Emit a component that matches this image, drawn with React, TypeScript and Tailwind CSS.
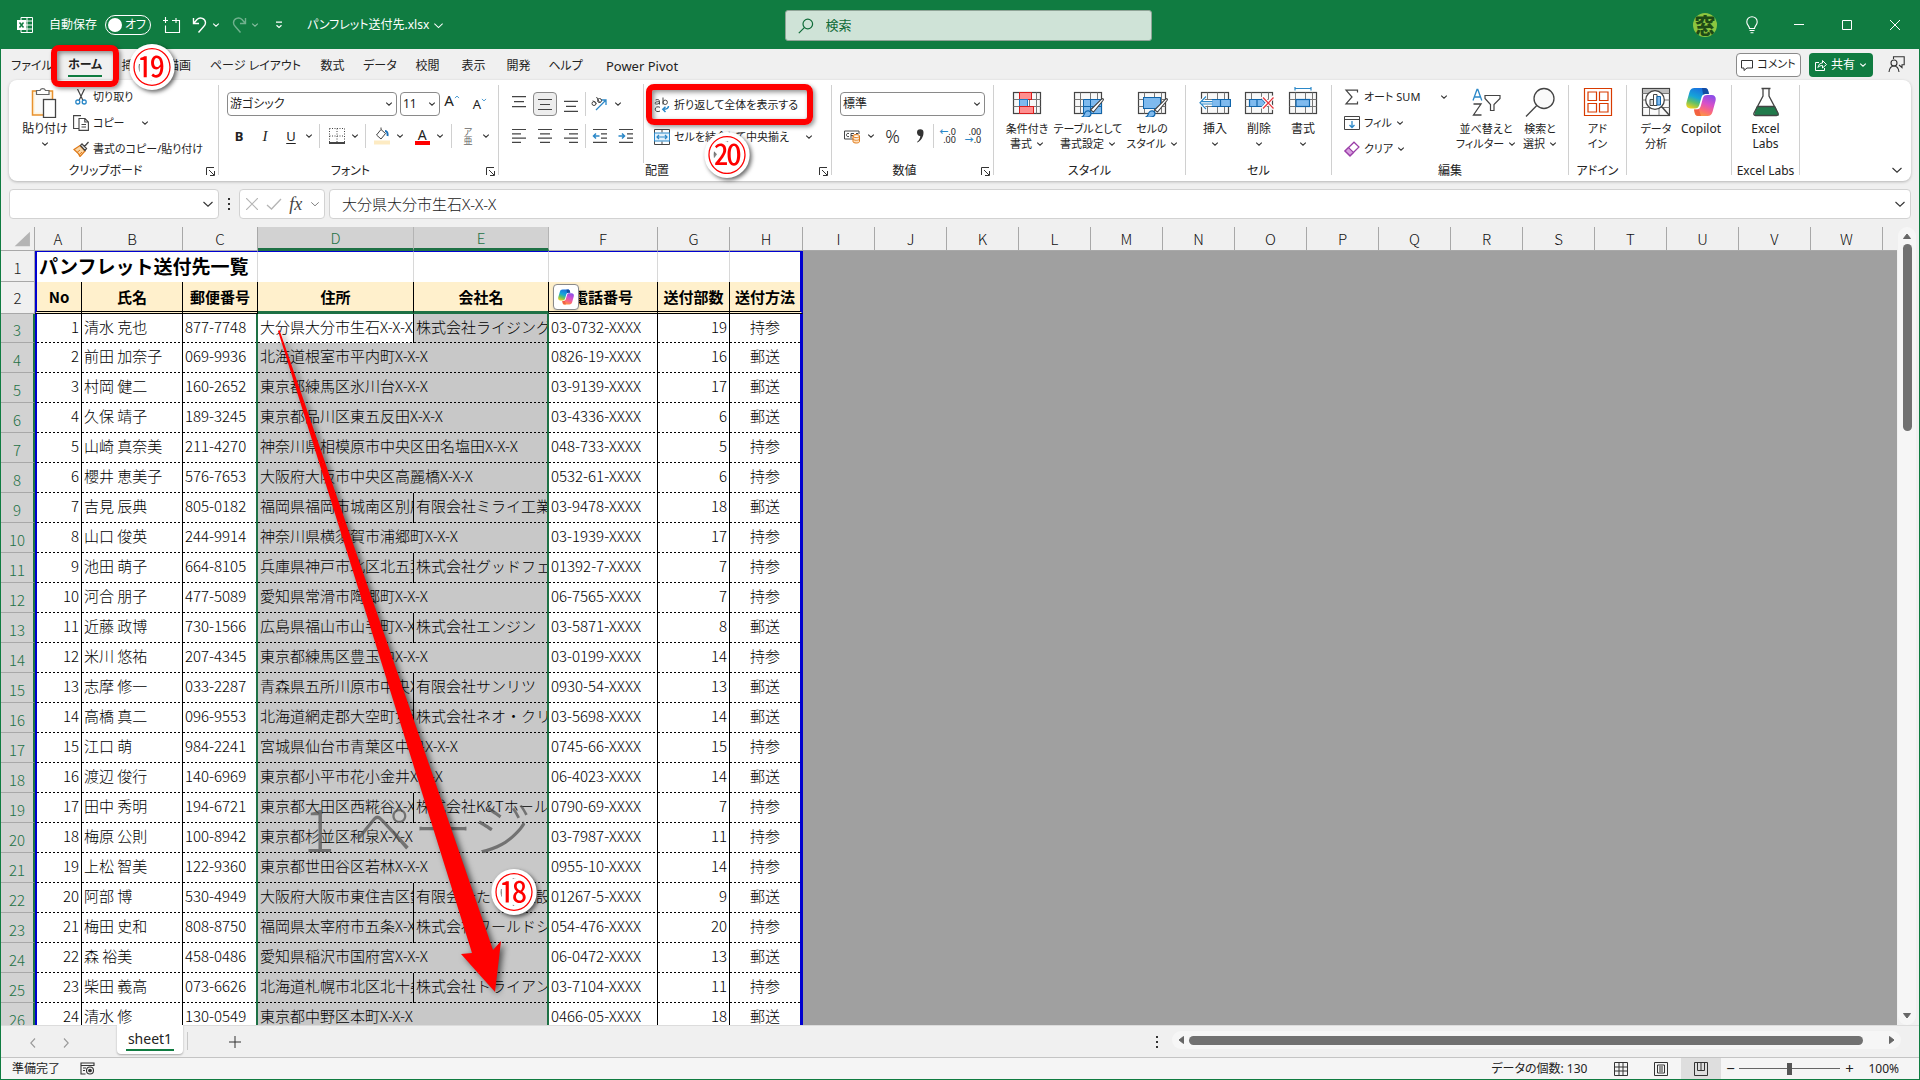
import React from "react";

type IconProps = { className?: string };

const Chevron = ({ className = "w-2 h-2 text-[#333]" }: IconProps) => (
  <svg viewBox="0 0 8 8" className={`inline-block shrink-0 ${className}`} fill="none" stroke="currentColor" strokeWidth="1.1">
    <path d="M1.2 2.6 4 5.2 6.8 2.6" />
  </svg>
);
const WideChevron = ({ className = "h-3 w-3 text-[#333]" }: IconProps) => (
  <svg viewBox="0 0 12 12" className={`inline-block shrink-0 ${className}`} fill="none" stroke="currentColor" strokeWidth="1.1">
    <path d="M1.500 4 6 8.200 10.500 4" />
  </svg>
);

const Launcher = ({ label }: { label: string }) => (
  <button aria-label={label} className="flex h-4 w-4 items-center justify-center">
    <svg viewBox="0 0 9 9" className="h-[9px] w-[9px]" fill="none" stroke="#333">
      <path d="M.5 8V.5H8M3 3l5 5M8.5 4v4.5H4" />
    </svg>
  </button>
);

/* ---------- ribbon drawings ---------- */

const PasteIcon = () => (
  <svg viewBox="0 0 28 32" className="h-8 w-7" fill="none">
    <rect x="1.5" y="5" width="20" height="24" fill="#fff4de" stroke="#e8912d" strokeWidth="1.500" />
    <rect x="4" y="7.500" width="15" height="19" fill="#fafafa" />
    <path d="M5.500 8.500V4.500h3.500a3 3 0 0 1 5.500 0h3.500v4z" fill="#fff" stroke="#666" strokeWidth="1.200" />
    <rect x="12.500" y="13.500" width="12" height="18" fill="#fff" stroke="#444" strokeWidth="1.300" />
  </svg>
);
const CutIcon = () => (
  <svg viewBox="0 0 16 16" className="h-4 w-4" fill="none">
    <path d="M4.500 0 10 11.500M11.500 0 6 11.500" stroke="#444" strokeWidth="1.200" />
    <circle cx="4.800" cy="13" r="2" stroke="#2b88c8" strokeWidth="1.300" />
    <circle cx="11.200" cy="13" r="2" stroke="#2b88c8" strokeWidth="1.300" />
  </svg>
);
const CopyIcon = () => (
  <svg viewBox="0 0 16 16" className="h-4 w-4" fill="none" stroke="#444" strokeWidth="1.100">
    <path d="M6 13.500H.600V.600H8" />
    <path d="M6 3.500h6l3.400 3.400v8.500H6zM11.800 3.500V7h3.600M8.500 9.500h4.500M8.500 12h4.500" />
  </svg>
);
const BrushIcon = () => (
  <svg viewBox="0 0 16 16" className="h-4 w-4" fill="none">
    <path d="M1 8.500 7 4.500l5 5.500-5 5.500c-1-2.500-3.500-5-6-7z" fill="#f9d7a8" stroke="#e07b1a" strokeWidth="1.300" />
    <path d="M4 11.500 7 9M6 13.800 9 11" stroke="#e07b1a" />
    <path d="M7.500 4.500 9 3l4.500 4.500L12 9.500zM11.500 5.500 15.500 1" stroke="#444" strokeWidth="1.300" fill="#fff" />
  </svg>
);

const Grid = ({ children, w = 28 }: { children?: React.ReactNode; w?: number }) => (
  <svg viewBox="0 0 32 30" className="h-[30px] w-8" fill="none">
    <rect x="2.500" y="5.500" width={w - 1} height="21" fill="#f8f8f8" stroke="#444" strokeWidth="1.200" />
    <path d={`M2.500 12.500h${w - 1}M2.500 19.500h${w - 1}M8.500 5.500v21M18.500 5.500v21M25.500 5.500v21`} stroke="#777" />
    {children}
  </svg>
);
const PaintBrush = () => (
  <>
    <path d="M18.500 23 29.500 12.200c1.500-1.200 2.500 0 1.500 1.300L21.500 25z" fill="#fff" stroke="#444" strokeWidth="1.100" />
    <path d="M10 30c2-1 2-2.500 3-4.500 1.500-2.500 6-2 6 1.200S15 31 10 30z" fill="#7fbaee" stroke="#1065ab" strokeWidth="1.200" />
  </>
);
const ConditionalIcon = () => (
  <Grid>
    <rect x="8.500" y="5.500" width="12" height="7" fill="#ff8f8f" stroke="#d81e1e" />
    <rect x="8.500" y="12.500" width="8" height="7" fill="#7fbaee" stroke="#1b7ac4" />
    <rect x="8.500" y="19.500" width="14" height="7" fill="#ff8f8f" stroke="#d81e1e" />
  </Grid>
);
const TableFormatIcon = () => (
  <Grid>
    <path d="M11.500 12.500h18v14h-18zM11.500 19.500h18M18.500 12.500v14" fill="#7fbaee" stroke="#1065ab" />
    <PaintBrush />
  </Grid>
);
const CellStyleIcon = () => (
  <Grid>
    <rect x="7.500" y="10.500" width="17" height="11" fill="#7fbaee" stroke="#1065ab" />
    <PaintBrush />
  </Grid>
);
const InsertIcon = () => (
  <Grid>
    <path d="M12.500 12.500H31.500v7H12.500M21.500 12.500v7" fill="#7fbaee" stroke="#1065ab" strokeWidth="1.200" />
    <path d="M7 9 .800 15.800 7 22.500M1.500 14.500H13M1.500 17.200H13" stroke="#fff" strokeWidth="3" />
    <path d="M7 9.500 1 15.800 7 22M2 14.700H13.500M2 17H13.500" stroke="#2b88c8" strokeWidth="1.200" />
  </Grid>
);
const DeleteIcon = () => (
  <Grid>
    <path d="M6.500 12.500h13l3 3.500-3 3.500h-13zM14 12.500v7" fill="#7fbaee" stroke="#1065ab" strokeWidth="1.200" />
    <path d="M19 9.500 31 22M31 9.500 19 22" stroke="#fff" strokeWidth="3.500" />
    <path d="M20 10.500 30.500 21.500M30.500 10.500 20 21.500" stroke="#e8373e" strokeWidth="1.300" />
  </Grid>
);
const FormatIcon = () => (
  <Grid>
    <rect x="9" y="12.500" width="13.500" height="7" fill="#7fbaee" stroke="#1065ab" strokeWidth="1.200" />
    <path d="M8 1.500h16M8 0v3.500M24 0v3.500" stroke="#2b88c8" strokeWidth="1.200" />
  </Grid>
);
const SortIcon = () => (
  <svg viewBox="0 0 30 30" className="h-[30px] w-[30px]" fill="none">
    <path d="M2 13.500 6 2.500h.800l4 11M3.200 10h6.500" stroke="#2b88c8" strokeWidth="1.300" />
    <path d="M2.500 17h7.500L2.500 28h8" stroke="#444" strokeWidth="1.300" />
    <path d="M14 8.500h15v3l-6 6v6h-3.500v-6L14 11.500z" stroke="#444" strokeWidth="1.200" />
  </svg>
);
const FindIcon = () => (
  <svg viewBox="0 0 30 30" className="h-[30px] w-[30px]" fill="none" stroke="#444" strokeWidth="1.300">
    <circle cx="19" cy="11.500" r="10" fill="#fafafa" />
    <path d="M11.800 18.500 1 29.500" />
  </svg>
);
const AddinIcon = () => (
  <svg viewBox="0 0 30 30" className="h-[30px] w-[30px]" fill="none" stroke="#d83b01" strokeWidth="1.200">
    <path d="M1.500 1.500h27v27h-27zM5 5h8.500v8.500H5zM16.500 5H25v8.500h-8.500zM5 16.500h8.500V25H5zM16.500 16.500H25V25h-8.500z" />
  </svg>
);
const AnalyzeIcon = () => (
  <svg viewBox="0 0 30 30" className="h-[30px] w-[30px]" fill="none" stroke="#444">
    <rect x="1.500" y="1.500" width="27" height="27" fill="#fafafa" strokeWidth="1.200" />
    <rect x="2" y="2" width="26" height="4" fill="#bdbdbd" stroke="none" />
    <path d="M1.500 6.500h27M1.500 13h27M1.500 20.500h27M8.500 20v8M18 20v8" stroke="#777" />
    <circle cx="14" cy="13" r="9.300" fill="#fff" strokeWidth="1.300" />
    <path d="M21 20l7.500 8.500" strokeWidth="1.500" />
    <path d="M9 12.500h3.500v6H9z" fill="#ddd" />
    <path d="M12.500 7.500h3.500v11h-3.500z" fill="#fff" />
    <path d="M16 9.500h3.500v8.500H16z" fill="#7fbaee" stroke="#1065ab" />
  </svg>
);
const CopilotIcon = ({ className = "h-[30px] w-[30px]", id }: IconProps & { id: string }) => (
  <svg viewBox="0 0 30 30" className={className}>
    <defs>
      <linearGradient id={`${id}a`} x1="0.600" y1="0" x2="0.200" y2="1">
        <stop offset="0" stopColor="#1a6fe0" />
        <stop offset="0.450" stopColor="#16a5d8" />
        <stop offset="0.700" stopColor="#5fc06a" />
        <stop offset="1" stopColor="#f2d21b" />
      </linearGradient>
      <linearGradient id={`${id}b`} x1="0.700" y1="0" x2="0.300" y2="1">
        <stop offset="0" stopColor="#8e4ee8" />
        <stop offset="0.400" stopColor="#d850c8" />
        <stop offset="0.700" stopColor="#fb6a7a" />
        <stop offset="1" stopColor="#fb9a3c" />
      </linearGradient>
    </defs>
    <path d="M8.500 1H19c1.800 0 2.600 1 3.200 2.800L23 7h-3.500c-2.500 0-3.500 1.500-4.200 4l-2 7c-.800 2.500-2 3.500-4.500 3.500H4.500C1 21.500-.300 19 .500 15.500L3.500 5C4.300 2.300 5.800 1 8.500 1z" fill={`url(#${id}a)`} />
    <path d="M21.500 29H12c-1.800 0-2.600-1-3.200-2.800L8 22.500h2.500c2.500 0 3.700-1.500 4.400-4l1.900-7C17.500 9 18.700 8 21.200 8h4.500c3.500 0 4.600 2.800 3.800 6l-3 11c-.800 2.700-2.300 4-5 4z" fill={`url(#${id}b)`} />
    <path d="M19 1c1.800 0 2.600 1 3.200 2.800L23 7h-3.500c-1 0-1.800.300-2.400.800L16 1z" fill="#12408f" opacity=".75" />
    <path d="M12 29c-1.800 0-2.600-1-3.200-2.800L8 22.500h2.500c1 0 1.700-.200 2.300-.600L15 29z" fill="#f0503c" opacity=".7" />
  </svg>
);
const FlaskIcon = () => (
  <svg viewBox="0 0 30 30" className="h-[30px] w-[30px]" fill="none">
    <path d="M5.500 19.500h19L28 28.500H3z" fill="#217a4b" />
    <path d="M10.500 1.500h9M12 1.500V9L3 26c-.600 1.300 0 2.500 1.500 2.500h21c1.500 0 2.100-1.200 1.500-2.500L18 9V1.500M6.300 19.500h17.400" stroke="#444" strokeWidth="1.300" />
  </svg>
);

const Lines = ({ rows }: { rows: [number, number, number][] }) => (
  <svg viewBox="0 0 16 16" className="h-4 w-4" stroke="#444" strokeWidth="1.200">
    {rows.map(([x1, x2, y]) => (
      <path key={y} d={`M${x1} ${y}H${x2}`} />
    ))}
  </svg>
);
const lineSets: Record<string, [number, number, number][]> = {
  top: [[1, 15, 0.6], [3, 13, 5.6], [1, 15, 10.6]],
  middle: [[1, 15, 3.5], [3, 13, 8.5], [1, 15, 13.5]],
  bottom: [[1, 15, 5.4], [3, 13, 10.4], [1, 15, 15.4]],
  left: [[1, 15, 1.5], [1, 10, 5.8], [1, 15, 10.1], [1, 10, 14.4]],
  center: [[1, 15, 1.5], [3, 13, 5.8], [1, 15, 10.1], [3, 13, 14.4]],
  right: [[1, 15, 1.5], [6, 15, 5.8], [1, 15, 10.1], [6, 15, 14.4]],
};
const IndentIcon = ({ out = false }: { out?: boolean }) => (
  <svg viewBox="0 0 16 16" className="h-4 w-4" fill="none" strokeWidth="1.200">
    <path d="M1 1.500h14M9 5.800h6M9 10.100h6M1 14.400h14" stroke="#444" />
    <path d={out ? "M7.500 8H1.500M4 5.500 1.500 8 4 10.500" : "M.500 8h6M4 5.500 6.500 8 4 10.500"} stroke="#2b88c8" strokeWidth="1.500" />
  </svg>
);

/* ---------- ribbon building blocks ---------- */

function Group({ label, launcher, className = "", children }: { label: string; launcher?: boolean; className?: string; children: React.ReactNode }) {
  return (
    <section aria-label={label} className={`flex shrink-0 flex-col ${className}`}>
      <div className="flex h-[83px] pt-1">{children}</div>
      <div className="flex h-4 items-center whitespace-nowrap">
        <span className="flex-1 text-center">{label}</span>
        {launcher && <Launcher label={`${label}の設定`} />}
      </div>
    </section>
  );
}
const GroupLine = () => <div className="mt-[5px] h-[90px] w-px shrink-0 bg-[#d0d0d0]" />;
const Line = () => <span className="mx-auto h-6 w-px bg-[#d0d0d0]" />;

function BigButton({ icon, lines, arrow, className = "text-[11px]" }: { icon: React.ReactNode; lines: string[]; arrow?: "inline" | "below"; className?: string }) {
  return (
    <button className={`flex shrink-0 flex-col items-center leading-[15px] whitespace-nowrap ${className}`}>
      <span className="mt-[3px] mb-1 flex h-[30px] items-center">{icon}</span>
      {lines.map((l, i) => (
        <span key={l} className="flex items-center gap-1">
          {l}
          {arrow === "inline" && i === lines.length - 1 && <Chevron />}
        </span>
      ))}
      {arrow === "below" && <Chevron className="mt-1 h-2 w-2 text-[#333]" />}
    </button>
  );
}

function SmallButton({ icon, label, arrow }: { icon: React.ReactNode; label: string; arrow?: string }) {
  return (
    <button className="flex h-[26px] items-center gap-1 text-[11px] whitespace-nowrap">
      {icon}
      <span>{label}</span>
      {arrow && <Chevron className={`h-2 w-2 text-[#333] ${arrow}`} />}
    </button>
  );
}

function Dropdown({ label, value, className }: { label: string; value: string; className: string }) {
  return (
    <label className={`relative block h-6 ${className}`}>
      <select aria-label={label} defaultValue={value} className="h-full w-full appearance-none rounded border border-[#8a8a8a] bg-white pl-[2px] text-[12px] text-[#222]">
        <option>{value}</option>
      </select>
      <Chevron className="pointer-events-none absolute top-2 right-1 h-2 w-2 text-[#333]" />
    </label>
  );
}

const ToolButton = ({ label, className = "w-6", children }: { label: string; className?: string; children: React.ReactNode }) => (
  <button aria-label={label} className={`flex h-6 shrink-0 items-center justify-center ${className}`}>
    {children}
  </button>
);
const Arrow = ({ label }: { label: string }) => (
  <ToolButton label={label} className="w-3">
    <Chevron />
  </ToolButton>
);

/* ---------- window chrome ---------- */

function TitleBar() {
  return (
    <header className="grid h-[49px] shrink-0 grid-cols-[1fr_367px_1fr] bg-[#107c41] pt-[10px] pl-4 text-[12px] text-white">
      <div className="flex h-[30px] items-center">
        <svg viewBox="0 0 16 16" className="h-4 w-4" fill="none" stroke="#fff">
          <path d="M4 3.500v-3h11.500v15H4v-3M10 .500v15M4 4h11.500M8 8h7.500M8 12h7.500" />
          <rect x=".500" y="3.500" width="8" height="9" fill="#fff" />
          <path d="M2.500 5.500l4 5M6.500 5.500l-4 5" stroke="#107c41" strokeWidth="1.500" />
        </svg>
        <label className="ml-4 flex items-center gap-2">
          自動保存
          <span className="relative flex h-5 w-[46px] items-center justify-end rounded-full border border-white pr-1 leading-none">
            <input type="checkbox" role="switch" className="absolute inset-0 m-0 opacity-0" />
            <span className="absolute left-[2px] h-[14px] w-[14px] rounded-full bg-white" />
            オフ
          </span>
        </label>
        <button aria-label="上書き保存" className="ml-3">
          <svg viewBox="0 0 18 18" className="h-[18px] w-[18px]" fill="none" stroke="#fff" strokeWidth="1.100">
            <path d="M2.500 9.500v7h14v-12H9M2.500 1v6M0 4.500h5M13 2v5M10.500 4.500h6" />
          </svg>
        </button>
        <button aria-label="元に戻す" className="ml-[11px]">
          <svg viewBox="0 0 16 16" className="h-4 w-4" fill="none" stroke="#fff" strokeWidth="1.400">
            <path d="M1.500 1v5.500H7M2 6l3-3.500c3-3 8.500-1.200 8.500 3.200 0 1.800-.700 2.800-1.800 3.900L6.500 15.500" />
          </svg>
        </button>
        <Chevron className="ml-1 h-2 w-2 text-white" />
        <button aria-label="やり直し" className="ml-[11px] opacity-40">
          <svg viewBox="0 0 16 16" className="h-4 w-4" fill="none" stroke="#fff" strokeWidth="1.400">
            <path d="M14.500 1v5.500H9M14 6l-3-3.500C8 -.500 2.500 1.300 2.500 5.700c0 1.800.700 2.800 1.800 3.900L9.500 15.500" />
          </svg>
        </button>
        <Chevron className="ml-1 h-2 w-2 text-white opacity-50" />
        <button aria-label="クイック アクセスの設定" className="ml-4">
          <svg viewBox="0 0 8 8" className="h-2 w-2" fill="none" stroke="#fff" strokeWidth="1.200">
            <path d="M1 1.200h6M1.500 4.200 4 6.500l2.500-2.300" />
          </svg>
        </button>
        <button className="ml-6 flex items-center gap-1">
          パンフレット送付先.xlsx
          <WideChevron className="h-[11px] w-[11px] text-white" />
        </button>
      </div>
      <label className="flex h-[31px] items-center gap-3 rounded-[3px] border border-[#8fa497] bg-[#cfe3d7] pl-3 text-[#0f6b38]">
        <svg viewBox="0 0 16 16" className="h-4 w-4" fill="none" stroke="#0f6b38" strokeWidth="1.200">
          <circle cx="9.800" cy="6" r="4.800" />
          <path d="M6.300 9.600.800 15.200" />
        </svg>
        <input aria-label="検索" placeholder="検索" className="min-w-0 flex-1 bg-transparent text-[13px] outline-none placeholder:text-[#0f6b38]" />
      </label>
      <div className="flex h-[30px] items-center justify-end">
        <span className="flex h-6 w-6 items-center justify-center overflow-hidden rounded-full bg-[#8cc63f] text-[21px] leading-none font-black text-[#1d4a16]">窓</span>
        <button aria-label="ヒント" className="ml-7 flex w-[14px] justify-center">
          <svg viewBox="0 0 12 18" className="h-[18px] w-3" fill="none" stroke="#fff" strokeWidth="1.100">
            <path d="M3.500 12.500C3.500 10 .800 9 .800 5.900a5.200 5.200 0 0 1 10.400 0c0 3.100-2.700 4.100-2.700 6.600zM3.500 14.500h5M4.500 16.800h3" />
          </svg>
        </button>
        <button aria-label="最小化" className="ml-4 flex w-12 justify-center">
          <svg viewBox="0 0 10 10" className="h-[10px] w-[10px]" stroke="#fff"><path d="M0 4.500h10" /></svg>
        </button>
        <button aria-label="最大化" className="flex w-12 justify-center">
          <svg viewBox="0 0 10 10" className="h-[10px] w-[10px]" stroke="#fff" fill="none"><path d="M.500.500h9v9h-9z" /></svg>
        </button>
        <button aria-label="閉じる" className="flex w-12 justify-center">
          <svg viewBox="0 0 10 10" className="h-[10px] w-[10px]" stroke="#fff"><path d="M0 0l10 10M10 0 0 10" /></svg>
        </button>
      </div>
    </header>
  );
}

const tabs: { label: string; width: string }[] = [
  { label: "ファイル", width: "w-[54px] text-[12px]" },
  { label: "ホーム", width: "w-[52px] text-[12px]" },
  { label: "挿入", width: "w-[45px] text-[12px]" },
  { label: "描画", width: "w-[46px] text-[12px]" },
  { label: "ページ レイアウト", width: "w-[107px] text-[12px]" },
  { label: "数式", width: "w-[47px] text-[12px]" },
  { label: "データ", width: "w-12 text-[12px]" },
  { label: "校閲", width: "w-[47px] text-[12px]" },
  { label: "表示", width: "w-[45px] text-[12px]" },
  { label: "開発", width: "w-[45px] text-[12px]" },
  { label: "ヘルプ", width: "w-[49px] text-[12px]" },
  { label: "Power Pivot", width: "w-[104px] text-[13px]" },
];

function TabStrip() {
  return (
    <nav aria-label="リボン タブ" className="flex h-[31px] shrink-0 items-center pl-1">
      {tabs.map((t) => (
        <button key={t.label} className={`flex h-full shrink-0 items-center justify-center pt-[2px] whitespace-nowrap ${t.width}`}>
          <span className={t.label === "ホーム" ? "border-b-2 border-[#107c41] leading-5 font-bold" : "leading-5"}>{t.label}</span>
        </button>
      ))}
      <button className="ml-auto flex h-6 w-[65px] items-center justify-center gap-1 rounded border border-[#8a8a8a] bg-white text-[11px] whitespace-nowrap">
        <svg viewBox="0 0 12 12" className="h-3 w-3" fill="none" stroke="#333"><path d="M.500 1.500h11v7.500H6L3 11.500V9H.500z" /></svg>
        コメント
      </button>
      <button className="ml-2 flex h-6 w-16 items-center justify-center gap-1 rounded bg-[#107c41] text-[12px] text-white">
        <svg viewBox="0 0 12 12" className="h-3 w-3" fill="none" stroke="#fff"><path d="M4 3.500H.500v8h9V9M3 8.500c.500-3 2-4.500 4.500-4.500V1.500l4 4-4 3.500V6.500C5.500 6.500 4 7 3 8.500z" /></svg>
        共有
        <Chevron className="h-2 w-2 text-white" />
      </button>
      <button aria-label="フィードバック" className="mr-[14px] ml-[15px]">
        <svg viewBox="0 0 17 17" className="h-[17px] w-[17px]" fill="none" stroke="#333" strokeWidth="1.100">
          <circle cx="6" cy="7" r="3" />
          <path d="M1 16c.500-4 2-6 5-6s4.500 2 5 6M5.500 3V.800h10.700v8H14v2.700L11 9" />
        </svg>
      </button>
    </nav>
  );
}

function Ribbon() {
  return (
    <div role="toolbar" aria-label="ホーム" className="mx-2 flex h-[101px] shrink-0 overflow-hidden rounded-lg bg-white text-[12px] leading-4 shadow-[0_1px_3px_rgba(0,0,0,0.25)]">
      <Group label="クリップボード" launcher className="w-[209px]">
        <BigButton icon={<PasteIcon />} lines={["貼り付け"]} arrow="below" className="ml-2 w-14 text-[12px]" />
        <div className="flex flex-col items-start">
          <SmallButton icon={<CutIcon />} label="切り取り" />
          <SmallButton icon={<CopyIcon />} label="コピー" arrow="ml-3" />
          <SmallButton icon={<BrushIcon />} label="書式のコピー/貼り付け" />
        </div>
      </Group>
      <GroupLine />
      <Group label="フォント" launcher className="w-[279px]">
        <div className="flex flex-1 flex-col px-2">
          <div className="mt-2 flex h-6 items-center">
            <Dropdown label="フォント" value="游ゴシック" className="w-[170px]" />
            <Dropdown label="フォント サイズ" value="11" className="ml-[3px] w-10" />
            <ToolButton label="拡大" className="w-6 items-start text-[15px]">A<Chevron className="mt-[2px] h-[6px] w-[6px] rotate-180 text-[#2b88c8]" /></ToolButton>
            <ToolButton label="縮小" className="ml-1 w-6 text-[13px]">A<Chevron className="mb-2 h-[6px] w-[6px] text-[#2b88c8]" /></ToolButton>
          </div>
          <div className="mt-[8px] flex h-6 items-center text-[13px]">
            <ToolButton label="太字"><b>B</b></ToolButton>
            <ToolButton label="斜体" className="ml-[2px] w-6 font-['Liberation_Serif'] text-[15px] italic">I</ToolButton>
            <ToolButton label="下線" className="ml-[2px] w-6"><span className="underline underline-offset-2">U</span></ToolButton>
            <Arrow label="下線の種類" />
            <Line />
            <ToolButton label="罫線">
              <svg viewBox="0 0 16 16" className="h-4 w-4" fill="none" stroke="#444">
                <path d="M.500.500h15v15M.500.500v15M8 .500v15M.500 8h15" strokeDasharray="1 1.500" />
                <path d="M0 15h16" strokeWidth="2" />
              </svg>
            </ToolButton>
            <Arrow label="罫線の種類" />
            <Line />
            <ToolButton label="塗りつぶし">
              <svg viewBox="0 0 16 18" className="h-[18px] w-4" fill="none" stroke="#444">
                <path d="M7 2.500 2.500 8 7 12l4.500-5.500zM7 2.500V.500" />
                <path d="M11 4c2 0 3 2 2.500 5" stroke="#1b6fb8" strokeWidth="2" />
                <path d="M0 15.500h16" stroke="#fdebc3" strokeWidth="4" />
              </svg>
            </ToolButton>
            <Arrow label="塗りつぶしの色" />
            <ToolButton label="フォントの色" className="ml-1 w-6">
              <span className="border-b-4 border-[#f00] px-[3px] text-[14px] leading-[13px]">A</span>
            </ToolButton>
            <Arrow label="フォントの色の種類" />
            <Line />
            <ToolButton label="ふりがな">
              <span className="flex flex-col text-center text-[9px] leading-[9px] text-[#666]"><span>ア</span><span>亜</span></span>
            </ToolButton>
            <Arrow label="ふりがなの設定" />
          </div>
        </div>
      </Group>
      <GroupLine />
      <Group label="配置" launcher className="w-[332px]">
        <div className="flex w-[145px] flex-col border-r border-[#d0d0d0] pl-2">
          <div className="mt-2 flex h-6 items-center gap-[2px]">
            <ToolButton label="上揃え"><Lines rows={lineSets.top} /></ToolButton>
            <ToolButton label="上下中央揃え" className="w-6 rounded border border-[#8a8a8a] bg-[#ededed]"><Lines rows={lineSets.middle} /></ToolButton>
            <ToolButton label="下揃え"><Lines rows={lineSets.bottom} /></ToolButton>
            <span className="h-6 w-px bg-[#d0d0d0]" />
            <ToolButton label="方向" className="w-[22px]">
              <svg viewBox="0 0 16 16" className="h-4 w-4" fill="none">
                <path d="M5 14 14.500 4.500M10 4h5v5" stroke="#2b88c8" strokeWidth="1.300" />
                <circle cx="3" cy="7.500" r="2" stroke="#444" /><path d="M2 4.500 5.500 8M5.500 1l3.500 6" stroke="#444" /><circle cx="8.500" cy="4.500" r="2" stroke="#444" />
              </svg>
            </ToolButton>
            <Arrow label="方向の種類" />
          </div>
          <div className="mt-[8px] flex h-6 items-center gap-[2px]">
            <ToolButton label="左揃え"><Lines rows={lineSets.left} /></ToolButton>
            <ToolButton label="中央揃え"><Lines rows={lineSets.center} /></ToolButton>
            <ToolButton label="右揃え"><Lines rows={lineSets.right} /></ToolButton>
            <span className="h-6 w-px bg-[#d0d0d0]" />
            <ToolButton label="インデントを減らす"><IndentIcon out /></ToolButton>
            <ToolButton label="インデントを増やす"><IndentIcon /></ToolButton>
          </div>
        </div>
        <div className="flex flex-col items-start gap-[6px] pt-2 pl-[10px]">
          <SmallButton
            icon={
              <svg viewBox="0 0 16 16" className="h-4 w-4" fill="none" stroke="#444">
                <path d="M1.500 3c2.500-1 4-.200 4 1.500V7.500M5.500 4.800C3 4.500 1 5 1 6.200S4 7.500 5.500 6" />
                <path d="M9 .500v7" /><circle cx="11.200" cy="5.300" r="2.200" />
                <path d="M6 10.300c-2.800-1.300-4.800 0-4.800 1.900s2 3.200 4.800 1.900" />
                <path d="M14.500 9c0 2.500-1.500 3.300-5.500 3.300M11.500 9.700 8.800 12.300l2.700 2.700" stroke="#2b88c8" strokeWidth="1.500" />
              </svg>
            }
            label="折り返して全体を表示する"
          />
          <SmallButton
            icon={
              <svg viewBox="0 0 16 16" className="h-4 w-4" fill="none" stroke="#444">
                <path d="M.500.500h15v15H.500zM8 .500v3M8 12.500v3" /><rect x=".500" y="4" width="15" height="8" fill="#e3f1fb" stroke="#2b88c8" />
                <path d="M3 8h10M5 6 3 8l2 2M11 6l2 2-2 2" stroke="#2b88c8" strokeWidth="1.200" />
              </svg>
            }
            label="セルを結合して中央揃え"
            arrow="ml-3"
          />
        </div>
      </Group>
      <GroupLine />
      <Group label="数値" launcher className="w-[161px]">
        <div className="flex flex-1 flex-col px-2">
          <div className="mt-2 h-6">
            <Dropdown label="表示形式" value="標準" className="w-full" />
          </div>
          <div className="mt-[8px] flex h-6 items-center justify-between">
            <ToolButton label="通貨表示形式">
              <svg viewBox="0 0 18 16" className="h-4 w-[18px]" fill="none" stroke="#444">
                <path d="M10 11H1.500V3H16v3M6 5.500c-2-.500-2.500.500-2.500 1.500S4 9 6 8.500M8 10V5.500h3M8 7.500h2M13 5.500h2" />
                <path d="M10 8c0-2 6.500-2 6.500 0v5.500c0 2-6.500 2-6.500 0zM10 8c0 2 6.500 2 6.500 0M10 10.700c0 2 6.500 2 6.500 0" fill="#fde0bf" stroke="#e07b1a" />
              </svg>
            </ToolButton>
            <Arrow label="通貨の種類" />
            <ToolButton label="パーセント スタイル" className="w-7 text-[18px] font-light">%</ToolButton>
            <ToolButton label="桁区切りスタイル" className="w-6">
              <svg viewBox="0 0 8 14" className="h-[14px] w-2" fill="#333"><path d="M1 3.500a3.200 3.200 0 0 1 6.500 0C7.500 8 5 11.500 1.500 13.500L1 13c2-1.500 3.200-3.600 3.300-6C2.500 7.300 1 5.500 1 3.500z" /></svg>
            </ToolButton>
            <span className="h-6 w-px bg-[#d0d0d0]" />
            <ToolButton label="小数点以下の表示桁数を増やす" className="w-6">
              <span className="text-right text-[9px] leading-2"><span className="font-bold text-[#2b88c8]">←</span>.0<br />.00</span>
            </ToolButton>
            <ToolButton label="小数点以下の表示桁数を減らす" className="w-6">
              <span className="text-right text-[9px] leading-2">.00<br /><span className="font-bold text-[#2b88c8]">→</span>.0</span>
            </ToolButton>
          </div>
        </div>
      </Group>
      <GroupLine />
      <Group label="スタイル" className="w-[191px]">
        <BigButton icon={<ConditionalIcon />} lines={["条件付き", "書式"]} arrow="inline" className="ml-1 w-[58px] text-[11px]" />
        <BigButton icon={<TableFormatIcon />} lines={["テーブルとして", "書式設定"]} arrow="inline" className="w-16 text-[11px]" />
        <BigButton icon={<CellStyleIcon />} lines={["セルの", "スタイル"]} arrow="inline" className="w-16 text-[11px]" />
      </Group>
      <GroupLine />
      <Group label="セル" className="w-[145px]">
        <BigButton icon={<InsertIcon />} lines={["挿入"]} arrow="below" className="ml-[7px] w-11 text-[12px]" />
        <BigButton icon={<DeleteIcon />} lines={["削除"]} arrow="below" className="w-11 text-[12px]" />
        <BigButton icon={<FormatIcon />} lines={["書式"]} arrow="below" className="w-11 text-[12px]" />
      </Group>
      <GroupLine />
      <Group label="編集" className="w-[236px]">
        <div className="flex w-[120px] flex-col items-start pl-3">
          <SmallButton
            icon={<svg viewBox="0 0 16 16" className="h-4 w-4" fill="none" stroke="#444" strokeWidth="1.200"><path d="M13.500 3.500V1.200H2L8 8l-6 6.800h11.500v-2.300" /></svg>}
            label="オート SUM"
            arrow="ml-4"
          />
          <SmallButton
            icon={<svg viewBox="0 0 16 16" className="h-4 w-4" fill="none" stroke="#444"><path d="M.500 1.500h15v13H.500zM.500 4.500h15" /><path d="M8 6v6.500M5.500 10 8 12.500l2.500-2.500" stroke="#2b88c8" strokeWidth="1.300" /></svg>}
            label="フィル"
            arrow="ml-0"
          />
          <SmallButton
            icon={<svg viewBox="0 0 16 16" className="h-4 w-4" fill="#fff" stroke="#9b3fa8" strokeWidth="1.200"><path d="M1 10 10 1.200l5 4.800L6 14.800z" /><path d="M1 10 4.500 6.600l5 4.800L6 14.800z" fill="#d9a0e0" /></svg>}
            label="クリア"
            arrow="ml-0"
          />
        </div>
        <BigButton icon={<SortIcon />} lines={["並べ替えと", "フィルター"]} arrow="inline" className="w-[68px] text-[11px]" />
        <BigButton icon={<FindIcon />} lines={["検索と", "選択"]} arrow="inline" className="w-10 text-[11px]" />
      </Group>
      <GroupLine />
      <Group label="アドイン" className="w-[57px]">
        <BigButton icon={<AddinIcon />} lines={["アド", "イン"]} className="mx-auto text-[11px]" />
      </Group>
      <GroupLine />
      <Group label="" className="w-[104px]">
        <BigButton icon={<AnalyzeIcon />} lines={["データ", "分析"]} className="ml-1 w-[50px] text-[11px]" />
        <BigButton icon={<CopilotIcon id="rib" />} lines={["Copilot"]} className="w-10 text-[12px]" />
      </Group>
      <GroupLine />
      <Group label="Excel Labs" className="w-[67px]">
        <BigButton icon={<FlaskIcon />} lines={["Excel", "Labs"]} className="mx-auto text-[12px]" />
      </Group>
      <GroupLine />
      <button aria-label="リボンを折りたたむ" className="mr-2 mb-1 ml-auto self-end">
        <WideChevron />
      </button>
    </div>
  );
}

function FormulaBar() {
  return (
    <div className="mx-2 mt-2 flex h-[30px] shrink-0">
      <label className="flex w-[210px] items-center rounded border border-[#d2d2d2] bg-white pr-1">
        <input aria-label="名前ボックス" className="min-w-0 flex-1 bg-transparent px-2 text-[14px] outline-none" />
        <WideChevron />
      </label>
      <svg viewBox="0 0 2 12" className="mx-[9px] h-[30px] w-[2px] py-[9px]" fill="#333"><path d="M0 0h2v2H0zM0 5h2v2H0zM0 10h2v2H0z" /></svg>
      <div className="flex w-[86px] items-center justify-between rounded border border-[#d2d2d2] bg-white pr-1 pl-[6px]">
        <button aria-label="キャンセル"><svg viewBox="0 0 12 12" className="h-3 w-3" stroke="#b5b5b5" strokeWidth="1.200"><path d="M0 0l12 12M12 0 0 12" /></svg></button>
        <button aria-label="入力"><svg viewBox="0 0 16 12" className="h-3 w-4" fill="none" stroke="#b5b5b5" strokeWidth="1.300"><path d="M1 7l4.500 4L15 1" /></svg></button>
        <button aria-label="関数の挿入" className="font-['Liberation_Serif'] text-[18px] leading-none text-[#444] italic">fx</button>
        <WideChevron className="h-[10px] w-[10px] text-[#777]" />
      </div>
      <label className="ml-1 flex flex-1 items-center rounded border border-[#d2d2d2] bg-white pr-1">
        <input aria-label="数式バー" defaultValue="大分県大分市生石X-X-X" className="min-w-0 flex-1 bg-transparent pl-3 text-[15px] font-light text-[#222] outline-none" />
        <WideChevron />
      </label>
    </div>
  );
}

/* ---------- worksheet ---------- */

type Row = [string, string, string, string, string, number, string];
const rows: Row[] = [
  ["清水 克也", "877-7748", "大分県大分市生石X-X-X", "株式会社ライジング", "03-0732-XXXX", 19, "持参"],
  ["前田 加奈子", "069-9936", "北海道根室市平内町X-X-X", "", "0826-19-XXXX", 16, "郵送"],
  ["村岡 健二", "160-2652", "東京都練馬区氷川台X-X-X", "", "03-9139-XXXX", 17, "郵送"],
  ["久保 靖子", "189-3245", "東京都品川区東五反田X-X-X", "", "03-4336-XXXX", 6, "郵送"],
  ["山崎 真奈美", "211-4270", "神奈川県相模原市中央区田名塩田X-X-X", "", "048-733-XXXX", 5, "持参"],
  ["櫻井 恵美子", "576-7653", "大阪府大阪市中央区高麗橋X-X-X", "", "0532-61-XXXX", 6, "持参"],
  ["吉見 辰典", "805-0182", "福岡県福岡市城南区別府X-X-X", "有限会社ミライ工業", "03-9478-XXXX", 18, "郵送"],
  ["山口 俊英", "244-9914", "神奈川県横須賀市浦郷町X-X-X", "", "03-1939-XXXX", 17, "持参"],
  ["池田 萌子", "664-8105", "兵庫県神戸市北区北五葉X-X-X", "株式会社グッドフェロー", "01392-7-XXXX", 7, "持参"],
  ["河合 朋子", "477-5089", "愛知県常滑市陶郷町X-X-X", "", "06-7565-XXXX", 7, "持参"],
  ["近藤 政博", "730-1566", "広島県福山市山手町X-X-X", "株式会社エンジン", "03-5871-XXXX", 8, "郵送"],
  ["米川 悠祐", "207-4345", "東京都練馬区豊玉中X-X-X", "", "03-0199-XXXX", 14, "持参"],
  ["志摩 修一", "033-2287", "青森県五所川原市中央X-X-X", "有限会社サンリツ", "0930-54-XXXX", 13, "郵送"],
  ["高橋 真二", "096-9553", "北海道網走郡大空町女満別X-X-X", "株式会社ネオ・クリエイト", "03-5698-XXXX", 14, "郵送"],
  ["江口 萌", "984-2241", "宮城県仙台市青葉区中央X-X-X", "", "0745-66-XXXX", 15, "持参"],
  ["渡辺 俊行", "140-6969", "東京都小平市花小金井X-X-X", "", "06-4023-XXXX", 14, "郵送"],
  ["田中 秀明", "194-6721", "東京都大田区西糀谷X-X-X", "株式会社K&Tホールディングス", "0790-69-XXXX", 7, "持参"],
  ["梅原 公則", "100-8942", "東京都杉並区和泉X-X-X", "", "03-7987-XXXX", 11, "持参"],
  ["上松 智美", "122-9360", "東京都世田谷区若林X-X-X", "", "0955-10-XXXX", 14, "持参"],
  ["阿部 博", "530-4949", "大阪府大阪市東住吉区針中野X-X-X", "有限会社たなか建設", "01267-5-XXXX", 9, "郵送"],
  ["梅田 史和", "808-8750", "福岡県太宰府市五条X-X-X", "株式会社ワールドシステム", "054-476-XXXX", 20, "持参"],
  ["森 裕美", "458-0486", "愛知県稲沢市国府宮X-X-X", "", "06-0472-XXXX", 13, "郵送"],
  ["柴田 義高", "073-6626", "北海道札幌市北区北十条X-X-X", "株式会社トライアングル", "03-7104-XXXX", 11, "持参"],
  ["清水 修", "130-0549", "東京都中野区本町X-X-X", "", "0466-05-XXXX", 18, "郵送"],
];
const letters = "ABCDEFGHIJKLMNOPQRSTUVW".split("");
const dataCols = ["w-[47px]", "w-[101px]", "w-[75px]", "w-[156px]", "w-[135px]", "w-[109px]", "w-[72px]", "w-[73px]"];

const cell = "overflow-hidden whitespace-nowrap p-0 pb-1 leading-5 bg-[repeating-linear-gradient(90deg,#000_0_2px,transparent_2px_4px)] bg-[length:100%_1px] bg-bottom bg-no-repeat";
const head = "h-8 border-b-[3px] border-double border-black bg-[#fff0cc] p-0 text-center font-bold leading-5 whitespace-nowrap";
const selectedHead = "h-8 border-r border-b-[3px] border-r-black border-b-[#1e7145] bg-[#fff0cc] p-0 text-center leading-5 font-bold";

function RowHead({ n, selected = false, tall = false }: { n: number; selected?: boolean; tall?: boolean }) {
  return (
    <th
      scope="row"
      className={
        selected
          ? "border-r-2 border-b border-r-[#1e7145] border-b-[#a8a8a8] bg-[#d2d2d2] p-0 pt-1 text-center text-[15px] leading-5 font-light text-[#1e7145]"
          : tall
            ? "h-[31px] border-r border-b border-[#a8a8a8] bg-[#f0f0f0] p-0 pt-1 text-center text-[15px] leading-5 font-light text-[#222]"
            : "border-r border-b border-[#a8a8a8] bg-[#f0f0f0] p-0 text-center text-[15px] leading-5 font-light text-[#222]"
      }
    >
      {n}
    </th>
  );
}

function Sheet() {
  return (
    <div className="relative min-w-0 flex-1 overflow-hidden">
      <table className="w-full table-fixed border-separate border-spacing-0 text-[15px] text-black">
        <colgroup>
          <col className="w-[34px]" />
          {dataCols.map((w, i) => <col key={i} className={w} />)}
          {letters.slice(8).map((l) => <col key={l} className="w-[72px]" />)}
          <col />
        </colgroup>
        <thead>
          <tr>
            <th className="h-6 border-r border-b border-[#a8a8a8] p-0" aria-label="すべて選択">
              <svg viewBox="0 0 34 24" className="h-[23px] w-[33px]" fill="#b4b4b4"><path d="M30 5v15H14z" /></svg>
            </th>
            {letters.map((l) => (
              <th
                key={l}
                scope="col"
                className={
                  l === "D" || l === "E"
                    ? "h-6 border-r border-b-[3px] border-r-[#b4b4b4] border-b-[#1e7145] bg-[#d2d2d2] p-0 text-center text-[15px] leading-5 font-light text-[#1e7145]"
                    : "h-6 border-r border-b border-[#a8a8a8] p-0 text-center text-[15px] leading-5 font-light text-[#111]"
                }
              >
                {l}
              </th>
            ))}
            <td className="border-b border-[#a8a8a8]" />
          </tr>
        </thead>
        <tbody>
          <tr>
            <RowHead n={1} tall />
            <td colSpan={3} className="border-t border-l-2 border-r border-t-[#0000d0] border-r-[#d8d8d8] border-l-[#0000d0] bg-white p-0 pb-[3px] pl-[2px] text-[19px] leading-6 font-bold whitespace-nowrap">パンフレット送付先一覧</td>
            {[0, 1, 2, 3].map((i) => <td key={i} className="border-t border-r border-t-[#0000d0] border-r-[#d8d8d8] bg-white" />)}
            <td className="border-t border-r-[3px] border-[#0000d0] bg-white" />
            <td rowSpan={26} colSpan={16} className="bg-[#a0a0a0]" />
          </tr>
          <tr>
            <RowHead n={2} />
            <td className={`${head} border-r border-l-2 border-l-[#0000d0] [border-left-style:solid] [border-right-style:solid]`}>No</td>
            <td className={`${head} border-r [border-right-style:solid]`}>氏名</td>
            <td className={`${head} border-r [border-right-style:solid]`}>郵便番号</td>
            <td className={selectedHead}>住所</td>
            <td className={selectedHead}>会社名</td>
            <td className={`${head} relative border-r [border-right-style:solid]`}>
              電話番号
              <button aria-label="Copilot" className="absolute top-[2px] left-1 flex h-[26px] w-[26px] items-center justify-center rounded border border-[#8a8a8a] bg-white shadow-sm">
                <CopilotIcon id="cell" className="h-4 w-4" />
              </button>
            </td>
            <td className={`${head} border-r [border-right-style:solid]`}>送付部数</td>
            <td className={`${head} border-r-[3px] border-r-[#0000d0] [border-right-style:solid]`}>送付方法</td>
          </tr>
          {rows.map(([name, zip, address, company, phone, count, method], i) => (
            <tr key={zip} className={i === 0 ? "h-[29px] font-light" : "h-[30px] font-light"}>
              <RowHead n={i + 3} selected />
              <td className={`${cell} border-r border-l-2 border-r-black border-l-[#0000d0] bg-white pr-[2px] text-right`}>{i + 1}</td>
              <td className={`${cell} border-r border-r-black bg-white pl-[2px]`}>{name}</td>
              <td className={`${cell} border-r-2 border-r-[#1e7145] bg-white pl-[2px]`}>{zip}</td>
              {company ? (
                <>
                  <td className={`${cell} border-r border-r-black pl-[2px] ${i === 0 ? "bg-white" : "bg-[#c8c8c8]"}`}>{address}</td>
                  <td className={`${cell} border-r-2 border-r-[#1e7145] bg-[#c8c8c8] pl-[2px]`}>{company}</td>
                </>
              ) : (
                <td colSpan={2} className={`${cell} border-r-2 border-r-[#1e7145] bg-[#c8c8c8] pl-[2px]`}>{address}</td>
              )}
              <td className={`${cell} border-r border-r-black bg-white pl-[2px]`}>{phone}</td>
              <td className={`${cell} border-r border-r-black bg-white pr-[2px] text-right`}>{count}</td>
              <td className={`${cell} border-r-[3px] border-r-[#0000d0] bg-white text-center`}>{method}</td>
            </tr>
          ))}
        </tbody>
      </table>
      <div className="pointer-events-none absolute top-[559px] left-[302px] flex text-[60px] leading-[80px] font-light whitespace-nowrap text-[#555]/75">
        <span className="w-[50px]">1</span>
        <span>ページ</span>
      </div>
    </div>
  );
}

const Tri = ({ d }: { d: string }) => (
  <svg viewBox="0 0 10 10" className="h-[10px] w-[10px] shrink-0" fill="#666"><path d={d} strokeLinejoin="round" stroke="#666" /></svg>
);

function SheetTabs() {
  return (
    <div className="flex h-8 shrink-0 border-t border-[#dcdcdc]">
      <div className="flex w-[116px] items-center gap-[21px] pl-[26px]">
        <button aria-label="前のシート"><WideChevron className="h-3 w-3 rotate-90 text-[#999]" /></button>
        <button aria-label="次のシート"><WideChevron className="h-3 w-3 -rotate-90 text-[#999]" /></button>
      </div>
      <button className="-mt-px flex h-[29px] w-[66px] justify-center rounded-b bg-white shadow-[0_1px_2px_rgba(0,0,0,0.3)]">
        <span className="mt-1 h-[22px] border-b-2 border-[#107c41] px-[2px] text-[14px] leading-[20px]">sheet1</span>
      </button>
      <span className="mt-[6px] ml-1 h-[18px] w-px bg-[#c8c8c8]" />
      <button aria-label="新しいシート" className="ml-[41px]">
        <svg viewBox="0 0 12 12" className="h-3 w-3" stroke="#333"><path d="M6 0v12M0 6h12" /></svg>
      </button>
      <svg viewBox="0 0 2 12" className="mt-[10px] mr-[14px] ml-auto h-3 w-[2px]" fill="#333"><path d="M0 0h2v2H0zM0 5h2v2H0zM0 10h2v2H0z" /></svg>
      <div className="mt-[5px] mr-[18px] flex h-[18px] w-[38%] items-center rounded-full bg-[#f6f6f6] px-1">
        <Tri d="M7.500 1.500v7L3 5z" />
        <div className="mr-6 ml-[3px] h-[9px] flex-1 rounded-full bg-[#717171]" />
        <Tri d="M2.500 1.500v7L7 5z" />
      </div>
    </div>
  );
}

function StatusBar() {
  return (
    <footer className="flex h-[22px] shrink-0 items-center border-t border-[#c4c4c4] bg-[#f5f5f5] pl-[11px] text-[12px] whitespace-nowrap">
      準備完了
      <button aria-label="マクロの記録" className="ml-5">
        <svg viewBox="0 0 15 13" className="h-[13px] w-[15px]" fill="none" stroke="#333" strokeWidth="1.100">
          <path d="M5.500 12H1V1h13v3M1 3.500h13M3 6h3M3 8.500h2" /><circle cx="10" cy="8.500" r="3.500" /><circle cx="10" cy="8.500" r="1.300" fill="#333" />
        </svg>
      </button>
      <span className="ml-auto">データの個数: 130</span>
      <button aria-label="標準" className="ml-[14px] flex h-full w-10 items-center justify-center">
        <svg viewBox="0 0 14 14" className="h-[14px] w-[14px]" fill="none" stroke="#333"><path d="M.500.500h13v13H.500zM5 .500v13M9 .500v13M.500 5h13M.500 9h13" /></svg>
      </button>
      <button aria-label="ページ レイアウト" className="flex h-full w-10 items-center justify-center">
        <svg viewBox="0 0 14 14" className="h-[14px] w-[14px]" fill="none" stroke="#333"><path d="M.500.500h13v13H.500zM3.500 3h7v8h-7zM5 5h4M5 7h4M5 9h4" /></svg>
      </button>
      <button aria-label="改ページ プレビュー" className="flex h-full w-10 items-center justify-center bg-[#dedede]">
        <svg viewBox="0 0 14 14" className="h-[14px] w-[14px]" fill="none" stroke="#333"><path d="M.500.500h13v13H.500zM3.500.500v8h7v-8M7 .500v8" /></svg>
      </button>
      <button aria-label="縮小" className="flex w-[18px] justify-center text-[15px] leading-none">−</button>
      <input
        aria-label="ズーム"
        type="range"
        defaultValue={50}
        className="h-4 w-[101px] appearance-none bg-[linear-gradient(#666,#666)] bg-[length:100%_1px] bg-center bg-no-repeat [&::-webkit-slider-thumb]:h-3 [&::-webkit-slider-thumb]:w-[5px] [&::-webkit-slider-thumb]:appearance-none [&::-webkit-slider-thumb]:bg-[#555]"
      />
      <button aria-label="拡大" className="flex w-[18px] justify-center text-[15px] leading-none">+</button>
      <span className="mr-5 ml-[10px]">100%</span>
    </footer>
  );
}

/* ---------- tutorial call-outs drawn over the window ---------- */

const Step = ({ n, className }: { n: string; className: string }) => (
  <span className={`absolute h-12 w-12 text-center text-[40px] leading-[48px] text-[#f00] drop-shadow-[2px_2px_2px_rgba(0,0,0,0.6)] [-webkit-text-stroke:8px_white] [paint-order:stroke_fill] ${className}`}>{n}</span>
);

function Callouts() {
  return (
    <div className="pointer-events-none absolute inset-0 overflow-hidden">
      <svg className="absolute top-[326px] left-[269px] h-[680px] w-[250px] drop-shadow-[3px_2px_3px_rgba(0,0,0,0.6)]" viewBox="270 326 250 680">
        <path d="M278 331 279.500 330 493 950 501 941 495 992 461 954 472 953z" fill="#f00" />
      </svg>
      <div className="absolute top-[45px] left-[50px] h-[42px] w-[68px] rounded-lg border-[6px] border-[#f00] shadow-[2px_2px_4px_rgba(0,0,0,0.4),inset_2px_2px_5px_rgba(0,0,0,0.45)]" />
      <div className="absolute top-[84px] left-[645px] h-[41px] w-[167px] rounded-lg border-[6px] border-[#f00] shadow-[2px_2px_4px_rgba(0,0,0,0.4),inset_2px_2px_5px_rgba(0,0,0,0.45)]" />
      <Step n="⑲" className="top-[43px] left-[127px]" />
      <Step n="⑳" className="top-[131px] left-[702px]" />
      <Step n="⑱" className="top-[868px] left-[489px]" />
    </div>
  );
}

export default function App() {
  return (
    <div className="relative flex h-screen flex-col overflow-hidden border border-t-0 border-[#107c41] bg-[#f0f0f0] font-['Noto_Sans','Noto_Sans_CJK_JP',sans-serif] text-[#222] [font-feature-settings:'palt']">
      <TitleBar />
      <TabStrip />
      <Ribbon />
      <FormulaBar />
      <main className="mt-2 flex min-h-0 flex-1 font-['Noto_Sans_CJK_JP',sans-serif] [font-feature-settings:normal]">
        <Sheet />
        <div className="flex w-[22px] flex-col items-center pr-[2px]">
          <div className="flex w-[18px] flex-1 flex-col items-center rounded-full bg-[#f6f6f6] py-1">
            <Tri d="M1.500 7.500h7L5 3z" />
            <div className="mt-[3px] h-[187px] w-[9px] rounded-full bg-[#717171]" />
            <span className="mt-auto"><Tri d="M1.500 2.500h7L5 7z" /></span>
          </div>
        </div>
      </main>
      <SheetTabs />
      <StatusBar />
      <Callouts />
    </div>
  );
}
